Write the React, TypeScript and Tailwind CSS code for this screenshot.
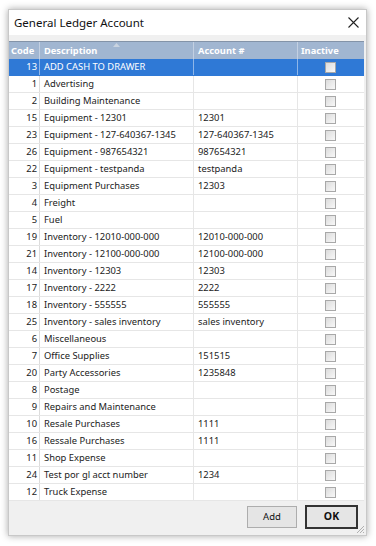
import React from "react";

const rows: [number, string, string][] = [
  [13, "ADD CASH TO DRAWER", ""],
  [1, "Advertising", ""],
  [2, "Building Maintenance", ""],
  [15, "Equipment - 12301", "12301"],
  [23, "Equipment - 127-640367-1345", "127-640367-1345"],
  [26, "Equipment - 987654321", "987654321"],
  [22, "Equipment - testpanda", "testpanda"],
  [3, "Equipment Purchases", "12303"],
  [4, "Freight", ""],
  [5, "Fuel", ""],
  [19, "Inventory - 12010-000-000", "12010-000-000"],
  [21, "Inventory - 12100-000-000", "12100-000-000"],
  [14, "Inventory - 12303", "12303"],
  [17, "Inventory - 2222", "2222"],
  [18, "Inventory - 555555", "555555"],
  [25, "Inventory - sales inventory", "sales inventory"],
  [6, "Miscellaneous", ""],
  [7, "Office Supplies", "151515"],
  [20, "Party Accessories", "1235848"],
  [8, "Postage", ""],
  [9, "Repairs and Maintenance", ""],
  [10, "Resale Purchases", "1111"],
  [16, "Ressale Purchases", "1111"],
  [11, "Shop Expense", ""],
  [24, "Test por gl acct number", "1234"],
  [12, "Truck Expense", ""],
];

function Check() {
  return (
    <div className="w-[11px] h-[11px] border border-[#a8a8a8] bg-gradient-to-br from-[#dcdcdc] to-[#f8f8f8]" />
  );
}

export default function App() {
  return (
    <div
      className="w-[376px] h-[546px] bg-white pt-[9px] pl-[8px]"
      style={{ fontFamily: '"Noto Sans", "Open Sans", sans-serif' }}
    >
      <div className="w-[359px] h-[527px] flex flex-col bg-[#f0f0f0] border border-[#c8c8c8] shadow-[0_0_7px_rgba(0,0,0,0.35)] relative">
        <div className="h-[25px] bg-white flex items-center justify-between pl-[5px] pr-[7px] shrink-0">
          <span className="text-[11.5px] text-[#111]">General Ledger Account</span>
          <svg width="11" height="11" viewBox="0 0 11 11">
            <path d="M0.5 0.5 L10.5 10.5 M10.5 0.5 L0.5 10.5" stroke="#222" strokeWidth="1.1" />
          </svg>
        </div>
        <div className="h-[6px] shrink-0" />
        <div className="flex flex-col bg-white mr-[2px] h-[460px] shrink-0">
          <div className="flex h-[18px] bg-[#a1b6d1] border-t border-[#8393a8] text-white text-[9.3px] font-bold">
            <div className="w-[31px] pl-[2px] flex items-center border-r border-[#c3d0e2]">Code</div>
            <div className="w-[154px] pl-[4px] flex items-center border-r border-[#c3d0e2] relative">
              Description
              <svg className="absolute left-[73px] top-[1px]" width="7" height="4" viewBox="0 0 7 4">
                <path d="M0 4 L3.5 0 L7 4 Z" fill="#c9d3e0" />
              </svg>
            </div>
            <div className="w-[104px] pl-[4px] flex items-center border-r border-[#c3d0e2]">Account #</div>
            <div className="flex-1 pl-[3px] flex items-center">Inactive</div>
          </div>
          {rows.map(([code, desc, acct], i) => {
            const sel = i === 0;
            return (
              <div
                key={i}
                className={
                  "flex h-[17px] text-[9.4px] border-b " +
                  (sel ? "bg-[#2f79d6] text-white border-[#2f79d6]" : "text-[#222] border-[#e6e6e6]")
                }
              >
                <div className={"w-[31px] pr-[2px] flex items-center justify-end border-r " + (sel ? "border-[#8fb6e8]" : "border-[#dcdcdc]")}>
                  {code}
                </div>
                <div className={"w-[154px] pl-[4px] flex items-center border-r whitespace-nowrap " + (sel ? "border-[#8fb6e8]" : "border-[#e6e6e6]")}>
                  {desc}
                </div>
                <div className={"w-[104px] pl-[4px] flex items-center border-r whitespace-nowrap " + (sel ? "border-[#8fb6e8]" : "border-[#e6e6e6]")}>
                  {acct}
                </div>
                <div className="flex-1 flex items-center justify-center pr-[1px]">
                  <Check />
                </div>
              </div>
            );
          })}
        </div>
        <div className="flex-1 flex items-center justify-end gap-[8px] pr-[8px] pb-[2px]">
          <button className="w-[50px] h-[22px] bg-[#e5e5e5] border border-[#adadad] text-[9.5px] text-[#111]">
            Add
          </button>
          <button className="w-[53px] h-[24px] bg-[#e5e5e5] border-2 border-[#333] text-[10.5px] font-bold text-[#111]">
            OK
          </button>
        </div>
        <svg className="absolute right-[1px] bottom-[1px]" width="10" height="10" viewBox="0 0 10 10">
          <path d="M9 2 L2 9 M9 5 L5 9 M9 8 L8 9" stroke="#b0b0b0" strokeWidth="1" />
        </svg>
      </div>
    </div>
  );
}
